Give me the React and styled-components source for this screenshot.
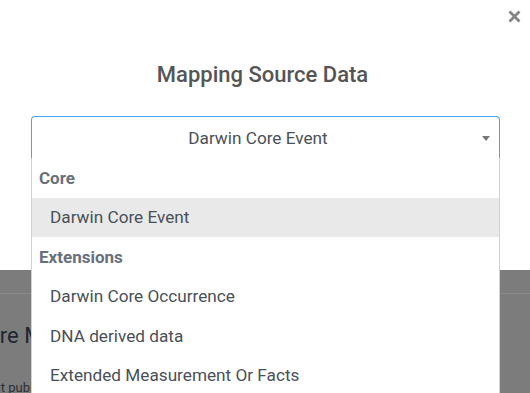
import { Fragment } from 'react';
import styled, { createGlobalStyle } from 'styled-components';

const GlobalStyle = createGlobalStyle`
    html, body {
        margin: 0;
        padding: 0;
        overflow: hidden;
    }
    body {
        font-family: Roboto, "Liberation Sans", sans-serif;
    }
`

const Page = styled.div`
    width: 100%;
    height: 100vh;
    background: #7c7c7c;
    overflow: hidden;
`
const PageHeader = styled.div`
    height: 293px;
    border-bottom: 1px solid #8b8b8b;
`
const PageBody = styled.div`
    padding-top: 28px;
`
const PageTitle = styled.h2`
    margin: 0 0 0 -27px;
    font-size: 22px;
    font-weight: 400;
    line-height: 28px;
    color: #1d2733;
    white-space: nowrap;
`
const PageMeta = styled.p`
    margin: 30px 0 0 -20px;
    font-size: 13px;
    line-height: 16px;
    color: #2a2f36;
    white-space: nowrap;
`

const Modal = styled.div`
    position: fixed;
    top: 0;
    left: 0;
    right: 0;
    height: 270px;
    background: #fff;
    padding: 62px 30px 0 31px;
    box-sizing: border-box;
`
const Close = styled.button`
    position: absolute;
    top: 9px;
    right: 8px;
    width: 15px;
    height: 15px;
    padding: 0;
    border: 0;
    background: none;
    display: flex;
    align-items: center;
    justify-content: center;
    cursor: pointer;
`
const Title = styled.h4`
    margin: 0 0 28px 0;
    padding-right: 6px;
    font-size: 22px;
    font-weight: 500;
    line-height: 26px;
    color: #555;
    text-align: center;
`
const SelectWrap = styled.div`
    position: relative;
`
const SelectBox = styled.div`
    height: 42px;
    box-sizing: border-box;
    padding-right: 15px;
    border: 1px solid #45a7f3;
    border-bottom: 0;
    border-radius: 4px 4px 0 0;
    display: flex;
    align-items: center;
    justify-content: center;
    font-size: 17.2px;
    color: #4a5058;
    position: relative;
`
const Caret = styled.span`
    position: absolute;
    right: 9px;
    top: 19px;
    width: 0;
    height: 0;
    border-left: 4px solid transparent;
    border-right: 4px solid transparent;
    border-top: 5px solid #777;
`
const Options = styled.ul`
    position: absolute;
    top: 42px;
    left: 0;
    right: 0;
    margin: 0;
    padding: 0;
    list-style: none;
    background: #fff;
    border: 1px solid #cfd3d6;
    border-top: 0;
`
const Group = styled.li`
    height: 39.5px;
    display: flex;
    align-items: center;
    padding-left: 7px;
    font-size: 17px;
    font-weight: 700;
    color: #68707a;
`
const Option = styled.li`
    height: 39.5px;
    display: flex;
    align-items: center;
    padding-left: 18px;
    font-size: 17.2px;
    color: #4a5058;
    background: ${props => props.active ? "#e9e9e9" : "#fff"};
`

export default function App(){
    const groups = [
        {label: "Core", items: ["Darwin Core Event"]},
        {label: "Extensions", items: [
            "Darwin Core Occurrence",
            "DNA derived data",
            "Extended Measurement Or Facts",
            "Simple Multimedia"
        ]}
    ]
    const selected = "Darwin Core Event"

    return(
        <>
            <GlobalStyle />
            <Page>
                <PageHeader />
                <PageBody>
                    <PageTitle>Core Mapping</PageTitle>
                    <PageMeta>Last published</PageMeta>
                </PageBody>
            </Page>
            <Modal>
                <Close aria-label="Close">
                    <svg width="13" height="13" viewBox="0 0 13 13">
                        <path d="M1.5 1.5 L11.5 11.5 M11.5 1.5 L1.5 11.5" stroke="#858585" strokeWidth="2.8" />
                    </svg>
                </Close>
                <Title>Mapping Source Data</Title>
                <SelectWrap>
                    <SelectBox>
                        {selected}
                        <Caret />
                    </SelectBox>
                    <Options>
                        {groups.map(group => (
                            <Fragment key={group.label}>
                                <Group>{group.label}</Group>
                                {group.items.map(item => (
                                    <Option key={item} active={item === selected}>{item}</Option>
                                ))}
                            </Fragment>
                        ))}
                    </Options>
                </SelectWrap>
            </Modal>
        </>
    )
}
